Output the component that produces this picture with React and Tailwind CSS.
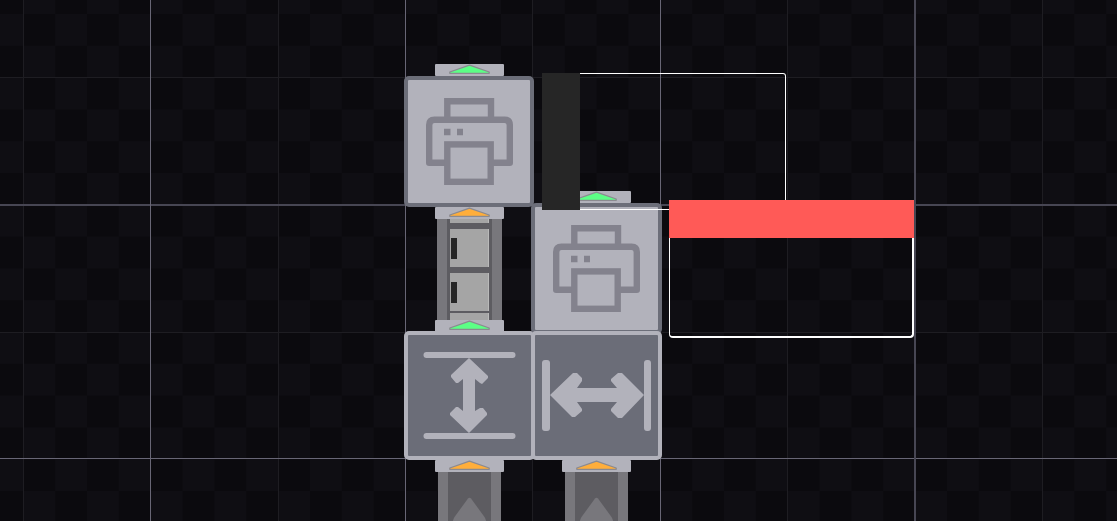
const minorX = [23, 278, 532, 787, 1042];
const majorX = [150, 405, 660];
const minorY = [77, 332];

function Grid() {
  return (
    <svg className="absolute inset-0 h-full w-full" shapeRendering="crispEdges" aria-hidden="true">
      <defs>
        <pattern id="checker" x="23.3" y="14" width="63.7" height="63.6" patternUnits="userSpaceOnUse">
          <rect width="64" height="64" fill="#0b0a0e" />
          <rect x="31.85" width="31.85" height="31.8" fill="#0f0e13" />
          <rect y="31.8" width="31.85" height="31.8" fill="#0f0e13" />
        </pattern>
      </defs>
      <rect width="100%" height="100%" fill="url(#checker)" />
      {minorX.map((x) => (
        <rect key={x} x={x} width="1" height="100%" fill="#1e1d22" />
      ))}
      {minorY.map((y) => (
        <rect key={y} y={y} width="100%" height="1" fill="#1e1d22" />
      ))}
      <rect y="204" width="100%" height="2" fill="#474653" />
      <rect y="458" width="100%" height="1" fill="#686675" />
      {majorX.map((x) => (
        <rect key={x} x={x} width="1" height="100%" fill="#686675" />
      ))}
      <rect x="914" width="2" height="100%" fill="#474653" />
    </svg>
  );
}

function Port({ color, className = "" }) {
  return (
    <svg className={"relative h-3 w-[69px] shrink-0 " + className} viewBox="0 0 69 12" aria-hidden="true">
      <rect width="69" height="12" rx="1" fill="#b2b2bb" />
      <path
        d="M34.5 1.200L54.200 8V9.300H14.800V8Z"
        fill={color}
        stroke="#8b8a90"
        strokeWidth="1.300"
        strokeLinejoin="round"
      />
    </svg>
  );
}

function Printer({ className }) {
  return (
    <div className={"h-[131px] shrink-0 self-start rounded-[5px] border-4 border-[#6c6e79] bg-[#b2b2bb] pt-[18px] pl-[18px] " + className}>
      <svg className="block h-[87px] w-[87px]" viewBox="0 0 87 87" fill="none" stroke="#83828d" strokeWidth="6.4" aria-hidden="true">
        <path d="M21.300 21V3.200H65V21" />
        <path d="M21 64.700H3.200V27Q3.200 21.700 8.500 21.700H78.500Q83.800 21.700 83.800 27V64.700H65" strokeLinejoin="round" />
        <rect x="21.300" y="46.400" width="43.400" height="37.400" />
        <path d="M18 34H24.500M31 34H37" />
      </svg>
    </div>
  );
}

function Balancer({ children }) {
  return (
    <div className="h-[129px] w-full shrink-0 rounded-[5px] border-4 border-[#b2b2bb] bg-[#6b6d78]">
      <svg className="h-full w-full" viewBox="0 0 123 121" fill="#b2b2bb" aria-hidden="true">
        {children}
      </svg>
    </div>
  );
}

function Crate({ className }) {
  return <div className={"shrink-0 border-r border-[#b9b9b9] bg-[#a5a5a5] " + className} />;
}

function LoadedCrate() {
  return (
    <div className="h-[38px] shrink-0 border-r border-[#b9b9b9] bg-[#a5a5a5] pt-[9px] pl-px">
      <div className="h-[21px] w-[6px] bg-[#262626]" />
    </div>
  );
}

function LoadedBelt() {
  return (
    <div className="flex h-[101px] w-[65px] shrink-0 flex-col gap-[6px] overflow-hidden border-x-10 border-[#78777c] bg-[#5d5c61] px-[3px]">
      <Crate className="h-[4px]" />
      <LoadedCrate />
      <LoadedCrate />
      <Crate className="-mt-1 h-2" />
    </div>
  );
}

function EmptyBelt() {
  return (
    <div className="flex min-h-12 w-[63px] flex-1 justify-center overflow-hidden border-x-10 border-[#78777c] bg-[#5d5c61] pt-[25px]">
      <svg className="h-8 w-[43px] shrink-0" viewBox="0 0 43 32" aria-hidden="true">
        <path d="M20 1.500Q21.500 0 23 1.500L36.500 20Q38.500 23 39.500 32H3.500Q4.500 23 6.500 20Z" fill="#78777c" />
      </svg>
    </div>
  );
}

export default function App() {
  return (
    <main className="relative h-screen min-h-[521px] w-full overflow-hidden bg-[#0b0a0e]">
      <Grid />

      <div className="relative flex h-full pl-[404px]">
        <div className="flex w-[131px] shrink-0 flex-col items-center pt-16">
          <Port color="#5cff86" />
          <Printer className="w-[130px]" />
          <Port color="#ffae3b" />
          <LoadedBelt />
          <Port color="#5cff86" className="-mb-px" />
          <Balancer>
            <rect x="15.500" y="17" width="92" height="6" rx="3" />
            <rect x="15.500" y="98" width="92" height="6" rx="3" />
            <path d="M61 23L80 41V43L74 49L72 48L67 44V76L72 73L75 73L79 78V80L61 98L42 80V78L48 72L50 72L55 76V44L50 48L48 48L43 42V40Z" />
          </Balancer>
          <Port color="#ffae3b" />
          <EmptyBelt />
        </div>
        <div className="-ml-1 flex w-[131px] shrink-0 flex-col items-center pt-[191px]">
          <Port color="#5cff86" />
          <Printer className="-mb-[3px] w-full" />
          <Balancer>
            <rect x="7" y="25" width="8" height="71" rx="3" />
            <rect x="109" y="25" width="7" height="71" rx="3" />
            <path d="M15 60L38 38H42L47 43V46L42 53H82L76 46V44L83 38H87L109 60L87 83H83L76 76V74L82 67H42L47 74V76L40 82H37Z" />
          </Balancer>
          <Port color="#ffae3b" />
          <EmptyBelt />
        </div>
      </div>

      <section className="absolute top-[73px] left-[542px] flex h-[137px] w-[244px]">
        <div className="w-[38px] bg-[#262626]" />
        <div className="flex-1 rounded-r-[3px] border-y border-r border-white" />
      </section>
      <section className="absolute top-[200px] left-[669px] flex h-[138px] w-[245px] flex-col">
        <div className="h-[38px] bg-[#ff5a57]" />
        <div className="flex-1 rounded-b-[4px] border-r-2 border-b-2 border-l border-white" />
      </section>
    </main>
  );
}
